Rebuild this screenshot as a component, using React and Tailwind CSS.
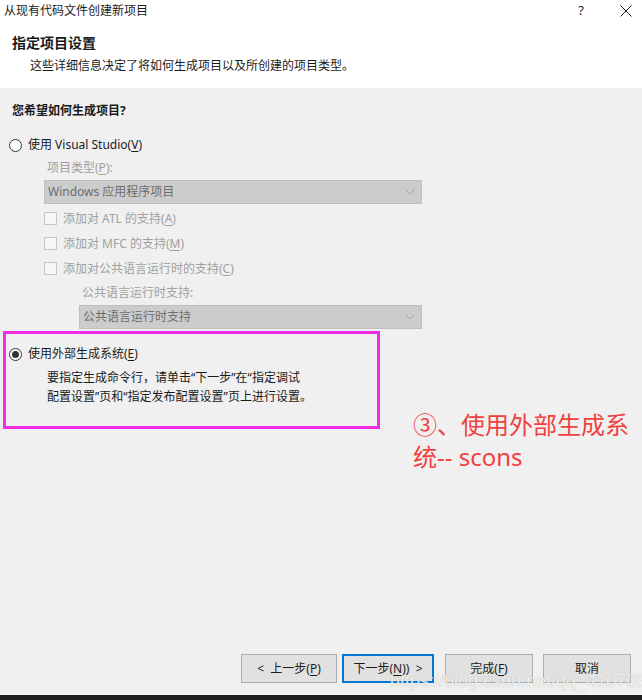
import React from 'react';

const font = { fontFamily: '"Noto Sans", "Noto Sans CJK SC", sans-serif' };

const Key = ({ children }) => <span className="underline underline-offset-2">{children}</span>;

const Chevron = () => (
  <svg width="10" height="6" viewBox="0 0 10 6" className="mr-[4px]">
    <path d="M0.5 0.5 L5 5 L9.5 0.5" fill="none" stroke="#a8a8a8" strokeWidth="1" />
  </svg>
);

const Select = ({ className, children }) => (
  <div className={`h-[24px] flex items-center justify-between bg-[#cccccc] border border-[#bfbfbf] pl-[3px] pr-[2px] text-[12px] text-[#6d6d6d] ${className}`}>
    <span>{children}</span>
    <Chevron />
  </div>
);

const Radio = ({ checked }) => (
  <span className="w-[13px] h-[13px] rounded-full border border-[#333333] bg-white flex items-center justify-center shrink-0">
    {checked && <span className="w-[7px] h-[7px] rounded-full bg-[#333333]" />}
  </span>
);

const Check = ({ children }) => (
  <div className="h-[25px] flex items-center pl-[44px]">
    <span className="w-[13px] h-[13px] border border-[#c6c6c6] bg-[#f7f7f7] shrink-0" />
    <span className="ml-[6px] text-[12px] text-[#a0a0a0]">{children}</span>
  </div>
);

const Button = ({ className, children }) => (
  <button className={`h-[29px] bg-[#e1e1e1] text-[12px] text-[#1a1a1a] flex items-center justify-center whitespace-pre ${className}`}>
    {children}
  </button>
);

export default function App() {
  return (
    <div className="w-[642px] h-[700px] flex flex-col bg-[#f0f0f0] relative overflow-hidden" style={font}>
      {/* header */}
      <div className="bg-white h-[88px] flex flex-col">
        <div className="h-[22px] flex items-center pl-[4px] text-[12px] text-[#1a1a1a]">
          <span>从现有代码文件创建新项目</span>
          <span className="ml-auto mr-[36px] text-[13px]">?</span>
          <svg width="12" height="12" viewBox="0 0 12 12" className="mr-[10px]">
            <path d="M0.5 0.5 L11.5 11.5 M11.5 0.5 L0.5 11.5" stroke="#222" strokeWidth="1" />
          </svg>
        </div>
        <div className="h-[20px] mt-[10px] flex items-center pl-[12px] text-[14px] font-bold text-[#1a1a1a]">
          指定项目设置
        </div>
        <div className="h-[20px] mt-[4px] flex items-center pl-[30px] text-[12px] text-[#1a1a1a]">
          这些详细信息决定了将如何生成项目以及所创建的项目类型。
        </div>
      </div>

      {/* body */}
      <div className="flex-1 flex flex-col">
        <div className="h-[20px] mt-[13px] flex items-center pl-[12px] text-[12px] font-bold text-[#1a1a1a]">
          您希望如何生成项目?
        </div>
        <div className="h-[20px] mt-[14px] flex items-center pl-[9px] text-[12px] text-[#1a1a1a]">
          <Radio />
          <span className="ml-[6px]">使用 Visual Studio(<Key>V</Key>)</span>
        </div>
        <div className="h-[20px] mt-[3px] flex items-center pl-[47px] text-[12px] text-[#a0a0a0]">
          项目类型(<Key>P</Key>):
        </div>
        <Select className="mt-[2px] ml-[44px] w-[378px]">Windows 应用程序项目</Select>
        <div className="mt-[2px] flex flex-col">
          <Check>添加对 ATL 的支持(<Key>A</Key>)</Check>
          <Check>添加对 MFC 的支持(<Key>M</Key>)</Check>
          <Check>添加对公共语言运行时的支持(<Key>C</Key>)</Check>
        </div>
        <div className="h-[20px] mt-[2px] flex items-center pl-[82px] text-[12px] text-[#a0a0a0]">
          公共语言运行时支持:
        </div>
        <Select className="mt-[2px] ml-[79px] w-[343px]">公共语言运行时支持</Select>

        <div className="mt-[2px] flex items-start">
          <div className="ml-[3px] w-[377px] h-[98px] border-[3px] border-[#ee2ee6] flex flex-col">
            <div className="h-[20px] mt-[10px] flex items-center pl-[3px] text-[12px] text-[#1a1a1a]">
              <Radio checked />
              <span className="ml-[6px]">使用外部生成系统(<Key>E</Key>)</span>
            </div>
            <div className="mt-[4px] pl-[41px] text-[12px] leading-[19px] text-[#1a1a1a]">
              <div>要指定生成命令行，请单击“下一步”在“指定调试</div>
              <div>配置设置”页和“指定发布配置设置”页上进行设置。</div>
            </div>
          </div>
          <div className="ml-[33px] mt-[78px] text-[24px] leading-[32px] text-[#f04040]">
            <div>③、使用外部生成系</div>
            <div>统-- scons</div>
          </div>
        </div>

        {/* buttons */}
        <div className="mt-auto mb-[12px] flex items-center justify-end pr-[11px]">
          <Button className="w-[96px] border border-[#adadad]">{'<  上一步('}<Key>P</Key>)</Button>
          <Button className="w-[92px] ml-[5px] border-2 border-[#0078d7]">下一步(<Key>N</Key>){')  >'}</Button>
          <Button className="w-[88px] ml-[11px] border border-[#adadad]">完成(<Key>F</Key>)</Button>
          <Button className="w-[88px] ml-[10px] border border-[#adadad]">取消</Button>
        </div>
      </div>

      <div className="h-[5px] bg-[#1e1e1e]" />

      {/* watermark over the buttons */}
      <div
        className="absolute left-[390px] top-[668px] text-[18px] text-white/80 whitespace-nowrap pointer-events-none"
        style={{ fontFamily: '"Liberation Sans", Arial, sans-serif', textShadow: '0 0 1px rgba(120,120,120,0.6)' }}
      >
        https://blog.csdn.net/qq_41070511
      </div>
    </div>
  );
}
